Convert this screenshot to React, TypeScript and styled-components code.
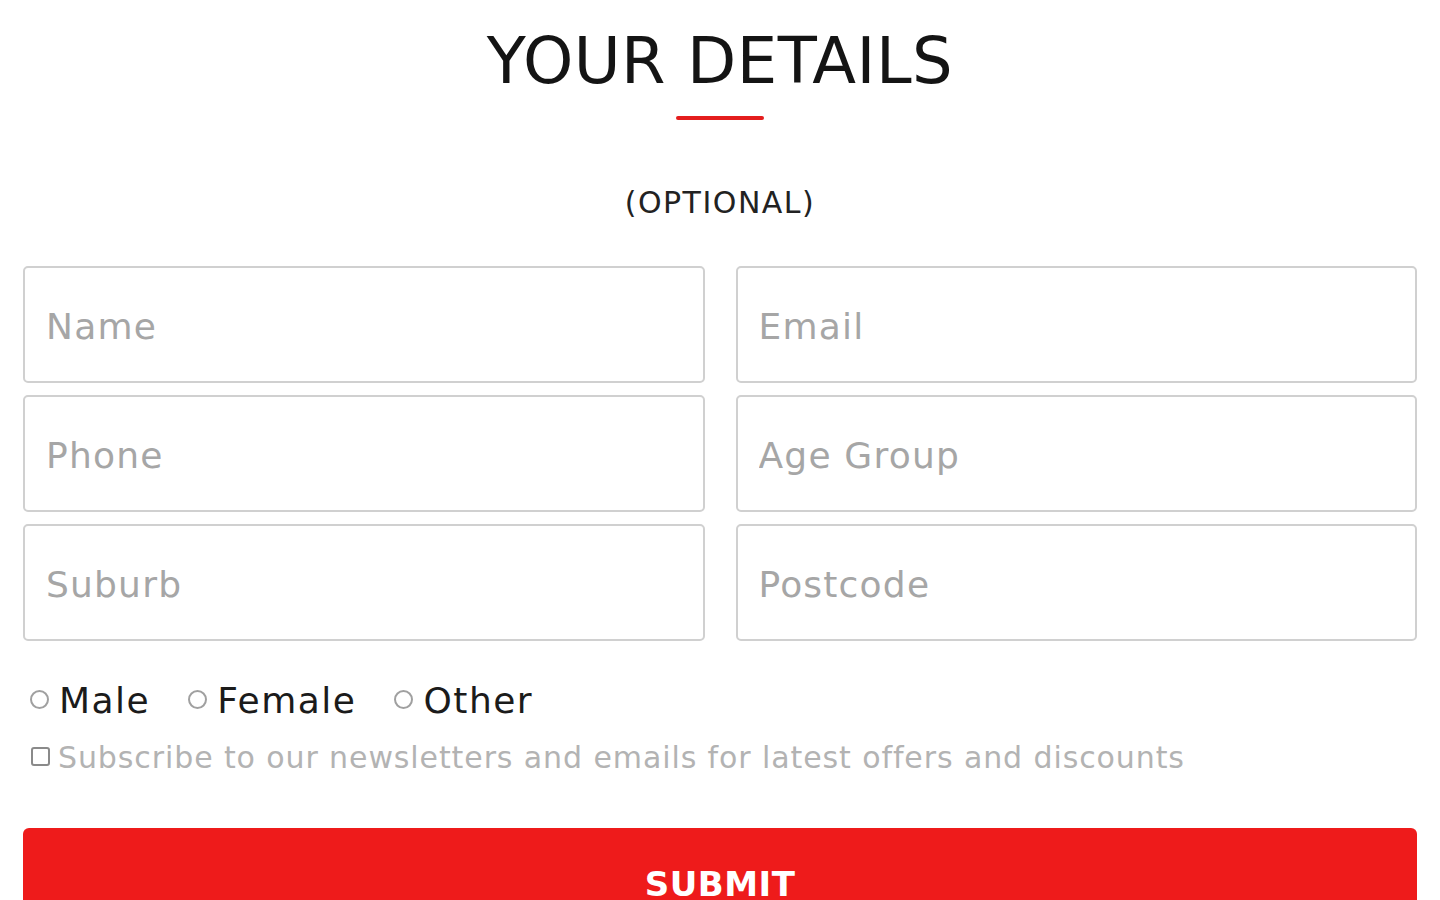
import React from "react";
import styled, { createGlobalStyle } from "styled-components";

const Global = createGlobalStyle`
  html, body { margin: 0; padding: 0; background: #fff; }
  body { font-family: "DejaVu Sans", "Open Sans", sans-serif; overflow: hidden; }
  * { box-sizing: border-box; }
`;

const Page = styled.div`
  width: 1440px;
  padding: 0 23px;
  display: flex;
  flex-direction: column;
  align-items: stretch;
  & > * { flex-shrink: 0; }
`;

const Title = styled.h1`
  margin: 0;
  padding-top: 28px;
  font-size: 64px;
  line-height: 66px;
  font-weight: 400;
  text-align: center;
  color: #141414;
  letter-spacing: 0.5px;
`;

const Rule = styled.div`
  align-self: center;
  width: 88px;
  height: 4px;
  background: #e41d1d;
  border-radius: 2px;
  margin-top: 22px;
`;

const Optional = styled.div`
  margin-top: 66px;
  font-size: 30px;
  line-height: 34px;
  letter-spacing: 1.5px;
  text-align: center;
  color: #222;
`;

const Grid = styled.div`
  margin-top: 46px;
  display: grid;
  grid-template-columns: 1fr 1fr;
  column-gap: 31px;
  row-gap: 12px;
`;

const Field = styled.input`
  height: 117px;
  width: 100%;
  border: 2px solid #d0d0d0;
  border-radius: 5px;
  padding: 4px 21px 0;
  font-family: inherit;
  font-size: 36px;
  letter-spacing: 1.2px;
  color: #333;
  outline: none;
  background: #fff;
  &::placeholder { color: #a6a6a6; }
`;

const RadioRow = styled.div`
  margin-top: 38px;
  display: flex;
  align-items: center;
  gap: 38px;
  padding-left: 7px;
`;

const RadioLabel = styled.label`
  display: flex;
  align-items: center;
  gap: 10px;
  font-size: 36px;
  line-height: 44px;
  letter-spacing: 1.5px;
  color: #1b1b1b;
`;

const Circle = styled.span`
  width: 19px;
  height: 19px;
  border: 2px solid #a0a0a0;
  border-radius: 50%;
  display: inline-block;
  margin-top: -4px;
`;

const CheckRow = styled.label`
  margin-top: 15px;
  display: flex;
  align-items: center;
  gap: 8px;
  padding-left: 8px;
  font-size: 30px;
  line-height: 40px;
  letter-spacing: 0.9px;
  color: #b3b3b3;
`;

const Box = styled.span`
  width: 19px;
  height: 19px;
  border: 2px solid #8a8a8a;
  border-radius: 3px;
  display: inline-block;
  margin-top: -3px;
`;

const Submit = styled.button`
  margin-top: 50px;
  height: 110px;
  width: 100%;
  border: none;
  border-radius: 6px 6px 0 0;
  background: #ee1b1b;
  color: #fff;
  font-family: inherit;
  font-size: 34px;
  font-weight: 700;
  display: flex;
  justify-content: center;
  align-items: flex-start;
  padding-top: 36px;
  letter-spacing: 0.5px;
`;

const fields = ["Name", "Email", "Phone", "Age Group", "Suburb", "Postcode"];
const genders = ["Male", "Female", "Other"];

export default function App() {
  return (
    <>
      <Global />
      <Page>
        <Title>YOUR DETAILS</Title>
        <Rule />
        <Optional>(OPTIONAL)</Optional>
        <Grid>
          {fields.map((f) => (
            <Field key={f} placeholder={f} />
          ))}
        </Grid>
        <RadioRow>
          {genders.map((g) => (
            <RadioLabel key={g}>
              <Circle />
              {g}
            </RadioLabel>
          ))}
        </RadioRow>
        <CheckRow>
          <Box />
          Subscribe to our newsletters and emails for latest offers and discounts
        </CheckRow>
        <Submit>SUBMIT</Submit>
      </Page>
    </>
  );
}
